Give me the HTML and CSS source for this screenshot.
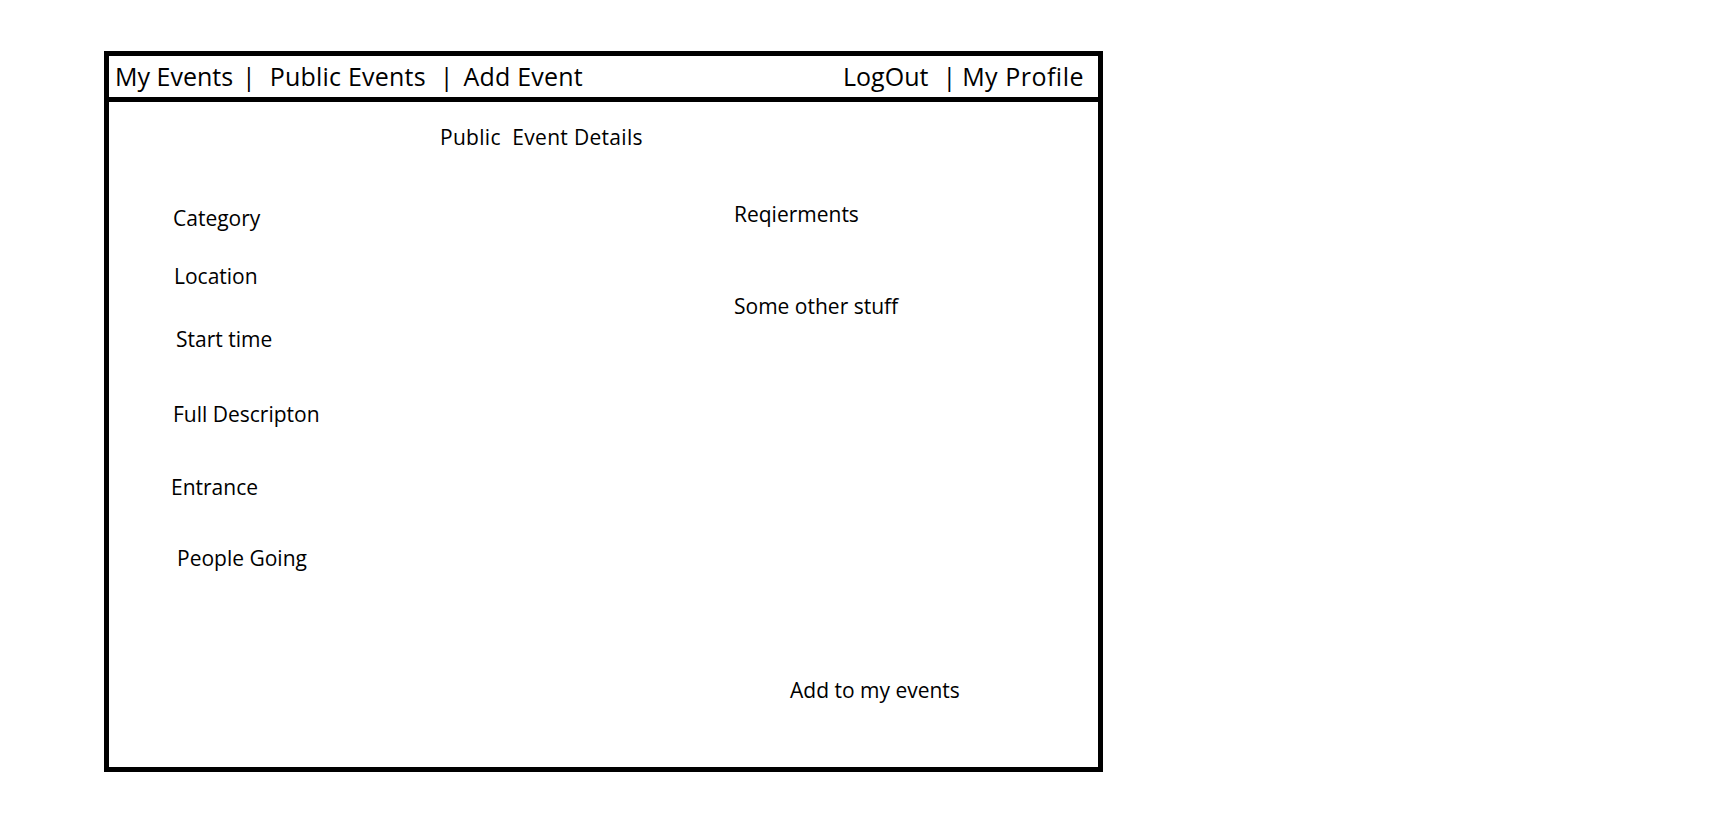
FILE: index.html
```html
<!DOCTYPE html>
<html>
<head>
<meta charset="utf-8">
<link rel="stylesheet" href="styles.css">
<title>Public Event Details</title>
</head>
<body>
<div class="frame">
  <div class="nav">
    <div class="nav-left">
      <span class="n1">My Events</span><span class="sep s1">|</span><span class="n2">Public Events</span><span class="sep s2">|</span><span class="n3">Add Event</span>
    </div>
    <div class="nav-right">
      <span class="n4">LogOut</span><span class="sep s3">|</span><span class="n5">My Profile</span>
    </div>
  </div>
  <div class="content">
    <div class="title">Public&nbsp; Event Details</div>
    <div class="columns">
      <div class="col-left">
        <div class="label l1">Category</div>
        <div class="label l2">Location</div>
        <div class="label l3">Start time</div>
        <div class="label l4">Full Descripton</div>
        <div class="label l5">Entrance</div>
        <div class="label l6">People Going</div>
      </div>
      <div class="col-right">
        <div class="label r1">Reqierments</div>
        <div class="label r2">Some other stuff</div>
      </div>
    </div>
    <div class="action">Add to my events</div>
  </div>
</div>
</body>
</html>
```

FILE: styles.css
```css
html, body {
  margin: 0;
  padding: 0;
  background: #fff;
}
body {
  font-family: "Open Sans", Lato, sans-serif;
  color: #000;
}
.frame {
  box-sizing: border-box;
  margin-left: 104px;
  margin-top: 51px;
  width: 999px;
  height: 721px;
  border: 5px solid #000;
  display: flex;
  flex-direction: column;
}
.nav {
  box-sizing: border-box;
  height: 46px;
  border-bottom: 5px solid #000;
  display: flex;
  justify-content: space-between;
  align-items: flex-start;
  padding-top: 6px;
  font-size: 25px;
  line-height: 28px;
  white-space: nowrap;
}
.nav-left {
  display: flex;
  padding-left: 6px;
}
.nav-right {
  display: flex;
  padding-right: 14px;
}
.sep { display: inline-block; }
.s1 { margin-left: 9px; }
.n2 { margin-left: 14px; letter-spacing: 0.2px; }
.s2 { margin-left: 14px; }
.n3 { margin-left: 10px; letter-spacing: 0.2px; }
.s3 { margin-left: 14px; }
.n5 { margin-left: 6px; letter-spacing: 0.5px; }

.content {
  flex: 1;
  font-size: 21px;
  line-height: 24px;
  white-space: nowrap;
}
.title {
  margin-top: 23px;
  margin-left: 331px;
  letter-spacing: 0.3px;
}
.columns {
  display: flex;
  margin-top: 53px;
}
.col-left {
  width: 560px;
  padding-left: 64px;
  box-sizing: border-box;
}
.col-right {
  padding-left: 65px;
}
.l1 { margin-top: 4px; margin-left: 0; }
.l2 { margin-top: 34px; margin-left: 1px; }
.l3 { margin-top: 39px; margin-left: 3px; }
.l4 { margin-top: 51px; margin-left: 0; }
.l5 { margin-top: 49px; margin-left: -2px; }
.l6 { margin-top: 47px; margin-left: 4px; }
.r2 { margin-top: 68px; }
.action {
  margin-top: 108px;
  margin-left: 681px;
}
```
